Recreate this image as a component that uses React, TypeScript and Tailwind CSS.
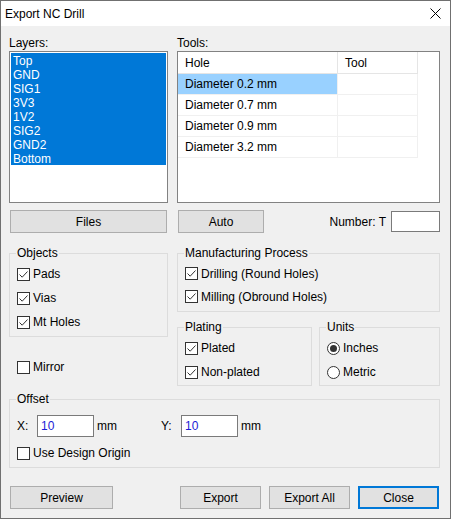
import { ReactNode } from 'react';

const layers = ['Top', 'GND', 'SIG1', '3V3', '1V2', 'SIG2', 'GND2', 'Bottom'];
const holes = ['Diameter 0.2 mm', 'Diameter 0.7 mm', 'Diameter 0.9 mm', 'Diameter 3.2 mm'];

function CheckBox({ checked, label }: { checked: boolean; label: string }) {
  return (
    <div className="flex h-[24px] items-center">
      <span className="flex h-[13px] w-[13px] items-center justify-center border border-[#333333] bg-white">
        {checked && (
          <svg width="11" height="11" viewBox="0 0 11 11">
            <path d="M1.5 5.5 L4.2 8.2 L9.5 2.5" stroke="#333333" strokeWidth="1" fill="none" />
          </svg>
        )}
      </span>
      <span className="ml-[3px]">{label}</span>
    </div>
  );
}

function Radio({ checked, label }: { checked: boolean; label: string }) {
  return (
    <div className="flex h-[24px] items-center">
      <span className="flex h-[13px] w-[13px] items-center justify-center rounded-full border border-[#333333] bg-white">
        {checked && <span className="h-[7px] w-[7px] rounded-full bg-[#333333]" />}
      </span>
      <span className="ml-[3px]">{label}</span>
    </div>
  );
}

function Group({ title, className, children }: { title: string; className?: string; children: ReactNode }) {
  return (
    <fieldset className={`border border-[#dcdcdc] pl-[7px] ${className ?? ''}`}>
      <legend className="-ml-[1px] px-[1px] leading-[14px]">{title}</legend>
      {children}
    </fieldset>
  );
}

function Button({ children, className }: { children: ReactNode; className?: string }) {
  return (
    <div className={`flex h-[23px] items-center justify-center border border-[#adadad] bg-[#e1e1e1] ${className ?? ''}`}>
      {children}
    </div>
  );
}

export default function App() {
  return (
    <div className="h-[519px] w-[451px] border border-[#707070] bg-[#f0f0f0] font-['Liberation_Sans',Arial,sans-serif] text-[12px] leading-[14px] text-black">
      {/* title bar */}
      <div className="flex h-[25px] items-center justify-between bg-white pl-[4px] pr-[9px]">
        <span>Export NC Drill</span>
        <svg width="11" height="11" viewBox="0 0 11 11">
          <path d="M0.5 0.5 L10.5 10.5 M10.5 0.5 L0.5 10.5" stroke="#000" strokeWidth="1" />
        </svg>
      </div>

      <div className="pl-[8px] pr-[10px] pt-[10px]">
        {/* layers / tools */}
        <div className="flex gap-[9px]">
          <div className="w-[159px]">
            <div className="mb-[1px] h-[14px]">Layers:</div>
            <div className="h-[152px] border border-[#828282] bg-white p-[1px]">
              {layers.map((l) => (
                <div key={l} className="h-[14px] bg-[#0078d7] pl-[2px] leading-[16px] text-white">
                  {l}
                </div>
              ))}
            </div>
          </div>
          <div className="w-[263px]">
            <div className="mb-[1px] h-[14px]">Tools:</div>
            <div className="h-[152px] border border-[#828282] bg-white">
              <div className="flex h-[22px] items-center">
                <div className="flex h-full w-[160px] items-center border-b border-r border-[#e5e5e5] pl-[7px]">Hole</div>
                <div className="flex h-full w-[80px] items-center border-b border-r border-[#e5e5e5] pl-[7px]">Tool</div>
              </div>
              {holes.map((h, i) => (
                <div key={h} className="flex h-[21px]">
                  <div
                    className={`flex h-full w-[160px] items-center border-b border-r border-[#f0f0f0] pl-[7px] ${
                      i === 0 ? 'bg-[#99d1ff]' : ''
                    }`}
                  >
                    {h}
                  </div>
                  <div className="h-full w-[80px] border-b border-r border-[#f0f0f0]" />
                </div>
              ))}
            </div>
          </div>
        </div>

        {/* buttons row */}
        <div className="mt-[7px] flex items-center gap-[9px]">
          <div className="w-[159px] px-[1px]">
            <Button>Files</Button>
          </div>
          <div className="flex w-[263px] items-center">
            <Button className="ml-[1px] w-[86px]">Auto</Button>
            <span className="ml-auto mr-[5px]">Number: T</span>
            <div className="h-[21px] w-[49px] border border-[#7a7a7a] bg-white" />
          </div>
        </div>

        {/* options */}
        <div className="mt-[13px] flex gap-[9px]">
          <div className="w-[159px]">
            <Group title="Objects" className="pb-[2px] pt-[2px]">
              <CheckBox checked label="Pads" />
              <CheckBox checked label="Vias" />
              <CheckBox checked label="Mt Holes" />
            </Group>
            <div className="mt-[18px] pl-[8px]">
              <CheckBox checked={false} label="Mirror" />
            </div>
          </div>
          <div className="w-[263px]">
            <Group title="Manufacturing Process" className="pb-[3px] pt-[2px]">
              <div className="flex h-[23px] items-center">
                <CheckBox checked label="Drilling (Round Holes)" />
              </div>
              <div className="flex h-[23px] items-center">
                <CheckBox checked label="Milling (Obround Holes)" />
              </div>
            </Group>
            <div className="mt-[8px] flex gap-[7px]">
              <Group title="Plating" className="w-[135px] pb-[1px] pt-[2px]">
                <CheckBox checked label="Plated" />
                <CheckBox checked label="Non-plated" />
              </Group>
              <Group title="Units" className="w-[121px] pb-[1px] pt-[2px]">
                <Radio checked label="Inches" />
                <Radio checked={false} label="Metric" />
              </Group>
            </div>
          </div>
        </div>

        {/* offset */}
        <Group title="Offset" className="mt-[6px] w-[431px] pb-[2px] pt-[9px]">
          <div className="flex h-[22px] items-center">
            <span className="w-[20px]">X:</span>
            <div className="flex h-[22px] w-[57px] items-center border border-[#7a7a7a] bg-white pl-[3px] text-[#1b1bd6]">10</div>
            <span className="ml-[3px] w-[64px]">mm</span>
            <span className="w-[20px]">Y:</span>
            <div className="flex h-[22px] w-[57px] items-center border border-[#7a7a7a] bg-white pl-[3px] text-[#1b1bd6]">10</div>
            <span className="ml-[3px]">mm</span>
          </div>
          <div className="mt-[4px]">
            <CheckBox checked={false} label="Use Design Origin" />
          </div>
        </Group>

        {/* bottom buttons */}
        <div className="mt-[18px] flex items-center pl-[1px] pr-[1px]">
          <Button className="w-[103px]">Preview</Button>
          <Button className="ml-auto w-[81px]">Export</Button>
          <Button className="ml-[8px] w-[81px]">Export All</Button>
          <div className="ml-[8px] flex h-[23px] w-[81px] items-center justify-center border-2 border-[#0078d7] bg-[#e1e1e1]">
            Close
          </div>
        </div>
      </div>
    </div>
  );
}
